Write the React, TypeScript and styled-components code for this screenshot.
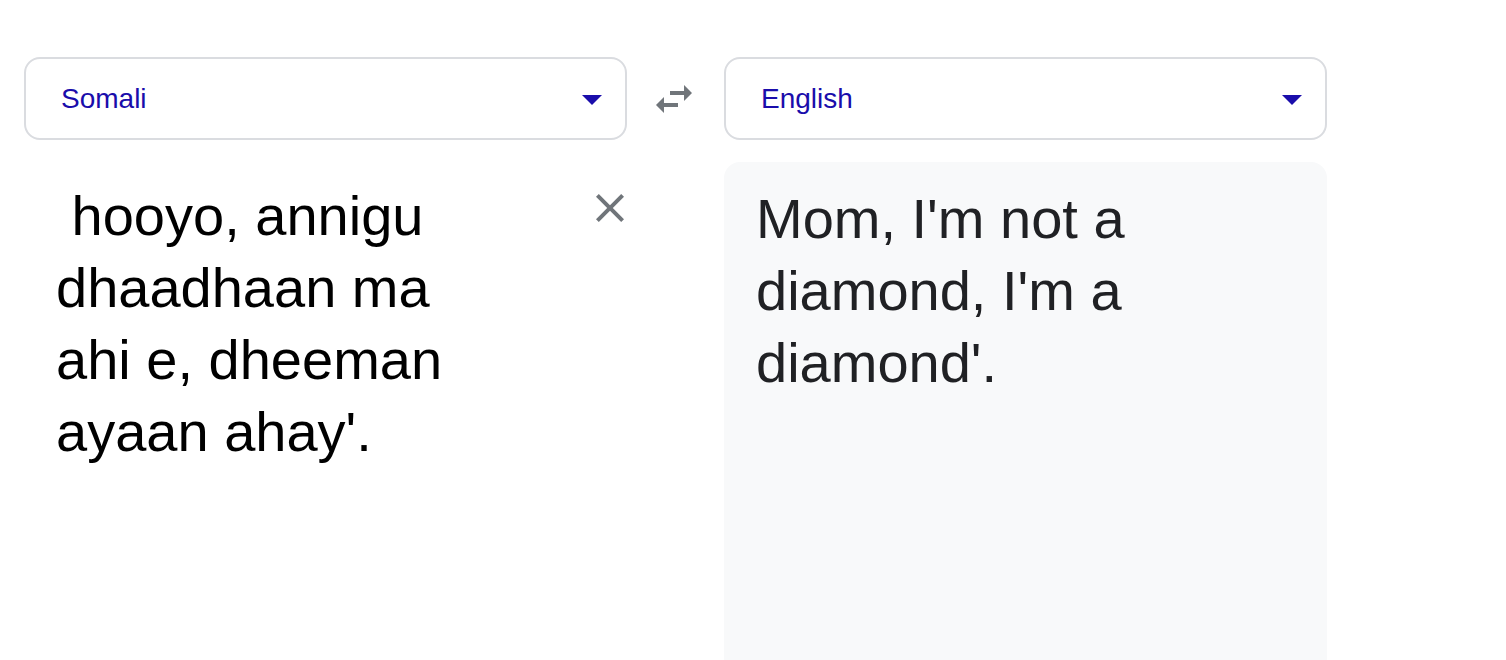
import styled, { createGlobalStyle } from 'styled-components'

const GlobalStyle = createGlobalStyle`
  html, body {
    margin: 0;
    padding: 0;
    background: #fff;
  }

  body {
    font-family: "Liberation Sans", Arial, sans-serif;
  }
`

const Page = styled.main`
  display: grid;
  grid-template-columns: 603px 97px 603px;
  row-gap: 22px;
  padding: 57px 0 0 24px;
  height: 660px;
  box-sizing: border-box;
  overflow: hidden;
`

const LanguageSelect = styled.button`
  display: flex;
  align-items: center;
  height: 83px;
  box-sizing: border-box;
  padding: 0 9px 0 35px;
  border: 2px solid #dadce0;
  border-radius: 16px;
  background: #fff;
  color: #1a0dab;
  font-family: "Liberation Sans", Arial, sans-serif;
  font-size: 28px;
  text-align: left;
  cursor: pointer;

  svg {
    margin-left: auto;
  }
`

const SwapButton = styled.button`
  align-self: center;
  justify-self: start;
  display: flex;
  margin-left: 23px;
  padding: 0;
  border: none;
  background: none;
  color: #70757a;
  cursor: pointer;
`

const SourcePanel = styled.div`
  display: flex;
  align-items: flex-start;
  padding: 18px 0 0 32px;
`

const SourceText = styled.div`
  flex: 0 1 440px;
  white-space: pre-wrap;
  color: #000;
  font-size: 56px;
  line-height: 72px;
`

const ClearButton = styled.button`
  display: flex;
  margin: 4px -7px 0 auto;
  padding: 0;
  border: none;
  background: none;
  color: #70757a;
  cursor: pointer;
`

const OutputPanel = styled.div`
  grid-column: 3;
  min-height: 560px;
  padding: 21px 32px;
  border-radius: 16px;
  background: #f8f9fa;
  color: #202124;
  font-size: 56px;
  line-height: 72px;
`

const DropIcon = () => (
  <svg width="48" height="48" viewBox="0 0 24 24" fill="currentColor">
    <path d="M7 10l5 5 5-5z" />
  </svg>
)

const SwapIcon = () => (
  <svg width="48" height="48" viewBox="0 0 24 24" fill="currentColor">
    <path d="M6.99 11L3 15l3.99 4v-3H14v-2H6.99v-3zM21 9l-3.99-4v3H10v2h7.01v3L21 9z" />
  </svg>
)

const CloseIcon = () => (
  <svg width="48" height="48" viewBox="0 0 24 24" fill="currentColor">
    <path d="M19 6.41L17.59 5 12 10.59 6.41 5 5 6.41 10.59 12 5 17.59 6.41 19 12 13.41 17.59 19 19 17.59 13.41 12z" />
  </svg>
)

export default function App () {
  return (
    <>
      <GlobalStyle />
      <Page>
        <LanguageSelect>Somali <DropIcon /></LanguageSelect>
        <SwapButton aria-label="Swap languages"><SwapIcon /></SwapButton>
        <LanguageSelect>English <DropIcon /></LanguageSelect>

        <SourcePanel>
          <SourceText>{" hooyo, annigu dhaadhaan ma ahi e, dheeman ayaan ahay'."}</SourceText>
          <ClearButton aria-label="Clear source text"><CloseIcon /></ClearButton>
        </SourcePanel>
        <OutputPanel>Mom, I'm not a diamond, I'm a diamond'.</OutputPanel>
      </Page>
    </>
  )
}
